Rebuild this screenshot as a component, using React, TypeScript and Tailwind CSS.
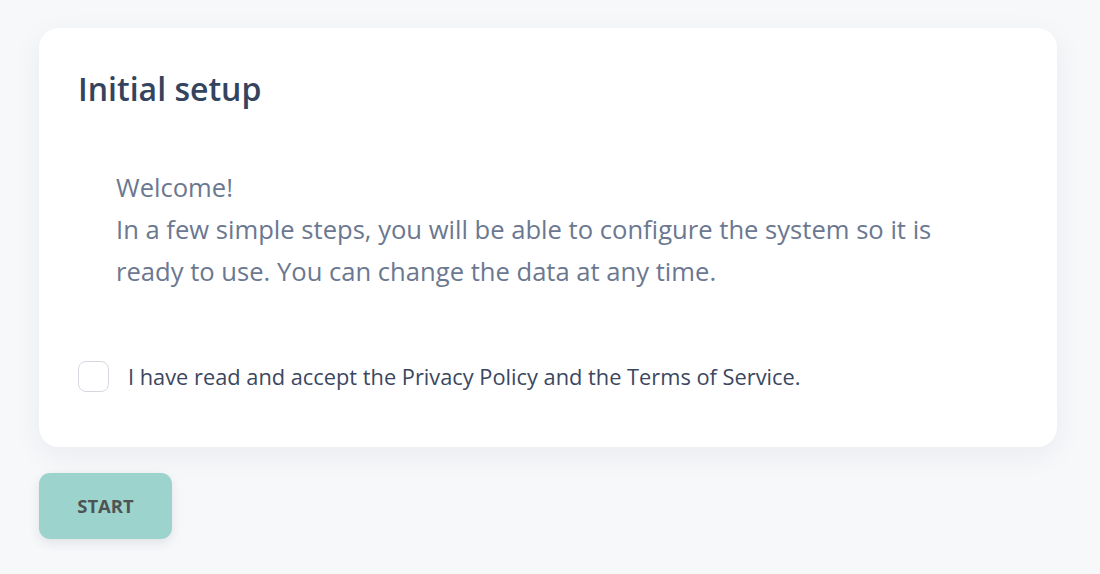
export default function App() {
  return (
    <div className="min-h-[574px] w-full bg-[#f7f8fa] px-[39px] pt-[28px] font-['Open_Sans',sans-serif]">
      <div className="flex h-[419px] w-[1018px] flex-col rounded-[20px] bg-white px-[39px] pt-[41px] shadow-[0_8px_30px_rgba(30,40,60,0.06)]">
        <h1 className="text-[32px] leading-[40px] font-semibold text-[#34435e]">Initial setup</h1>
        <div className="mt-[58px] pl-[38px] text-[25.6px] leading-[42px] text-[#6b7890]">
          <p>Welcome!</p>
          <p className="w-[860px]">
            In a few simple steps, you will be able to configure the system so it is ready to use. You can change the data at any time.
          </p>
        </div>
        <label className="mt-[68px] flex items-center gap-[19px]">
          <span className="h-[31px] w-[31px] rounded-[8px] border border-[#d5d9df] bg-white" />
          <span className="text-[21.8px] leading-[30px] text-[#3b4760]">
            I have read and accept the Privacy Policy and the Terms of Service.
          </span>
        </label>
      </div>
      <button className="mt-[26px] h-[66px] w-[133px] rounded-[11px] bg-[#9dd3cd] text-[18.5px] font-bold text-[#4d5453] shadow-[0_4px_12px_rgba(30,40,60,0.10)]">
        START
      </button>
    </div>
  );
}
